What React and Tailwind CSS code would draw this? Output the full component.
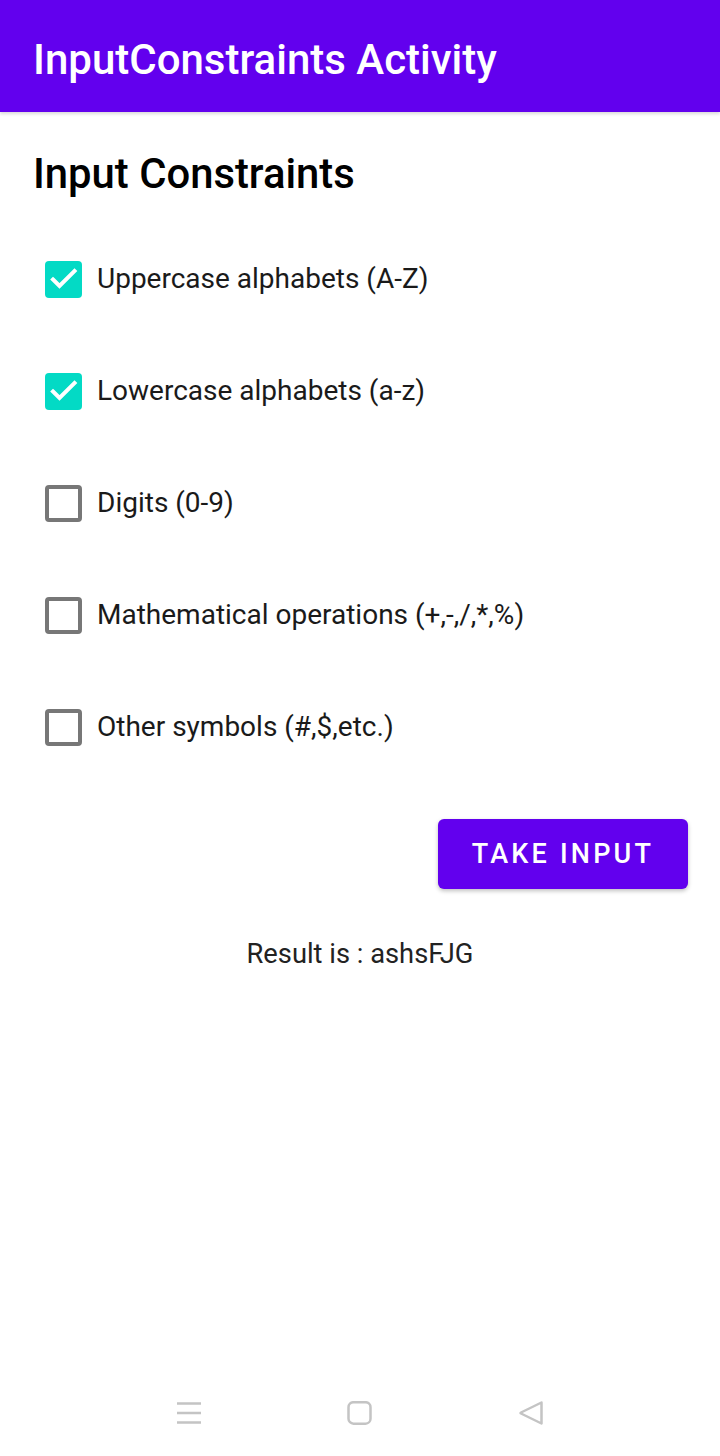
import React from "react";

const items = [
  { label: "Uppercase alphabets (A-Z)", checked: true },
  { label: "Lowercase alphabets (a-z)", checked: true },
  { label: "Digits (0-9)", checked: false },
  { label: "Mathematical operations (+,-,/,*,%)", checked: false },
  { label: "Other symbols (#,$,etc.)", checked: false },
];

function Box({ checked }) {
  if (checked) {
    return (
      <div className="w-[37px] h-[37px] rounded-[4px] bg-[#03DAC5] shrink-0">
        <svg width="37" height="37" viewBox="0 0 37 37" fill="none">
          <path d="M8 18.5l6.5 6.5L29.5 10" stroke="white" strokeWidth="4" strokeLinecap="square" />
        </svg>
      </div>
    );
  }
  return <div className="w-[37px] h-[37px] rounded-[4px] border-4 border-[#777777] shrink-0" />;
}

export default function App() {
  return (
    <div className="w-[720px] h-[1456px] bg-white flex flex-col" style={{ fontFamily: "Roboto, 'Noto Sans', sans-serif" }}>
      <div className="h-[112px] bg-[#6200EE] flex items-center px-[33px] pt-[6px] shadow-[0_2px_3px_rgba(0,0,0,0.15)]">
        <span className="text-white text-[42px] font-medium">InputConstraints Activity</span>
      </div>
      <div className="flex flex-col flex-1">
        <div className="pl-[33px] pt-[40px] text-[41.8px] font-medium text-black leading-[44px]">Input Constraints</div>
        <div className="flex flex-col pt-[27px] pl-[45px]">
          {items.map((it) => (
            <div key={it.label} className="h-[112px] flex items-center gap-[15px]">
              <Box checked={it.checked} />
              <span className="text-[28px] text-[#1a1a1a]">{it.label}</span>
            </div>
          ))}
        </div>
        <div className="flex justify-end pr-[32px] pt-[36px]">
          <button className="w-[250px] h-[70px] rounded-[6px] bg-[#6200EE] text-white text-[27px] font-medium tracking-[3.2px] shadow-[0_2px_4px_rgba(0,0,0,0.25)]">
            TAKE INPUT
          </button>
        </div>
        <div className="text-center pt-[46px] text-[27.3px] text-[#222] leading-[38px]">Result is : ashsFJG</div>
        <div className="flex-1" />
        <div className="h-[86px] flex items-center justify-center gap-[145px]">
          <svg width="26" height="24" viewBox="0 0 26 24">
            <path d="M1 2.5h24M1 12h24M1 21.5h24" stroke="#c4c4c4" strokeWidth="2.5" />
          </svg>
          <svg width="26" height="24" viewBox="0 0 26 24">
            <rect x="1.5" y="1.2" width="22" height="21.5" rx="5" fill="none" stroke="#c4c4c4" strokeWidth="2.5" />
          </svg>
          <svg width="26" height="26" viewBox="0 0 26 26">
            <path d="M23.5 2.5 L3 12.5 Q2 13 3 13.5 L23.5 23.5 Z" fill="none" stroke="#c4c4c4" strokeWidth="2.5" strokeLinejoin="round" />
          </svg>
        </div>
      </div>
    </div>
  );
}
